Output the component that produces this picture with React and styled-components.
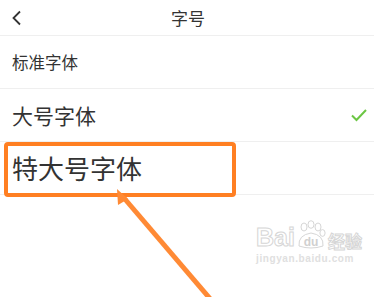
import React from "react";
import styled, { createGlobalStyle } from "styled-components";

const GlobalStyle = createGlobalStyle`
  html, body { margin: 0; padding: 0; background: #fff; }
  body { font-family: "Noto Sans CJK SC", "Noto Sans", sans-serif; }
`;

const Screen = styled.div`
  position: relative;
  width: 374px;
  height: 297px;
  overflow: hidden;
  background: #fff;
  color: #333;
`;

const Header = styled.div`
  display: grid;
  grid-template-columns: 60px 1fr 60px;
  align-items: center;
  height: 35px;
  border-bottom: 1px solid #efefef;
`;

const Back = styled.div`
  display: flex;
  align-items: center;
  padding-left: 11px;
  height: 100%;
`;

const Title = styled.div`
  text-align: center;
  font-size: 17px;
  line-height: 1;
  color: #333;
  padding-left: 2px;
`;

const Row = styled.div`
  display: flex;
  align-items: center;
  justify-content: space-between;
  height: 52px;
  padding: 0 6px 0 12px;
  border-bottom: 1px solid #efefef;
`;

const Label = styled.span`
  font-size: ${(p) => p.$size}px;
  line-height: 1;
  color: #333;
  white-space: nowrap;
`;

const Highlight = styled.div`
  position: absolute;
  left: 4px;
  top: 142px;
  width: 224px;
  height: 47px;
  border: 4px solid #ff7f22;
  border-radius: 4px;
`;

const Arrow = styled.svg`
  position: absolute;
  left: 0;
  top: 0;
`;

const Watermark = styled.div`
  position: absolute;
  left: 256px;
  top: 220px;
  display: flex;
  flex-direction: column;
  align-items: flex-start;
  font-family: "Liberation Sans", Arial, sans-serif;
`;

const Brand = styled.div`
  display: flex;
  align-items: flex-end;
  gap: 1px;
  height: 30px;
`;

const BrandText = styled.span`
  font-size: 25px;
  font-weight: bold;
  line-height: 1;
  color: #fff;
  -webkit-text-stroke: 1px #d6d6d6;
`;

const BrandCn = styled.span`
  font-family: "Noto Sans CJK SC", sans-serif;
  font-size: 17px;
  font-weight: bold;
  line-height: 1;
  color: #fff;
  -webkit-text-stroke: 1px #d6d6d6;
  margin-left: 1px;
  margin-bottom: 1px;
`;

const Site = styled.span`
  font-size: 10px;
  font-weight: bold;
  color: #e0e0e0;
  margin-top: 3px;
  letter-spacing: 0.6px;
`;

function Chevron() {
  return (
    <svg width="12" height="16" viewBox="0 0 12 16">
      <path d="M9 1.5 L2.5 8 L9 14.5" fill="none" stroke="#333" strokeWidth="1.8" />
    </svg>
  );
}

function Check() {
  return (
    <svg width="18" height="14" viewBox="0 0 18 14">
      <path d="M2 7.5 L6.5 12 L16 2" fill="none" stroke="#6cc644" strokeWidth="2" />
    </svg>
  );
}

function Paw() {
  return (
    <svg width="30" height="30" viewBox="0 0 30 30">
      <g fill="#fff" stroke="#d6d6d6" strokeWidth="1">
        <ellipse cx="8" cy="7" rx="3" ry="4" />
        <ellipse cx="15" cy="4.5" rx="3" ry="3.8" />
        <ellipse cx="22" cy="7" rx="3" ry="4" />
        <ellipse cx="26.5" cy="13" rx="2.6" ry="3.4" />
        <path d="M3 26 Q2 15 15 13 Q28 15 27 26 Q15 30 3 26 Z" />
      </g>
      <text x="15" y="26" textAnchor="middle" fontSize="12" fontWeight="bold" fill="#d0d0d0" fontFamily="Liberation Sans, sans-serif">du</text>
    </svg>
  );
}

export default function App() {
  return (
    <>
      <GlobalStyle />
      <Screen>
        <Header>
          <Back><Chevron /></Back>
          <Title>字号</Title>
          <div />
        </Header>
        <Row><Label $size={16.5}>标准字体</Label></Row>
        <Row><Label $size={21}>大号字体</Label><Check /></Row>
        <Row><Label $size={26}>特大号字体</Label></Row>

        <Watermark>
          <Brand>
            <BrandText>Bai</BrandText>
            <Paw />
            <BrandCn>经验</BrandCn>
          </Brand>
          <Site>jingyan.baidu.com</Site>
        </Watermark>

        <Highlight />
        <Arrow width="374" height="297" viewBox="0 0 374 297">
          <line x1="218" y1="308" x2="124" y2="198" stroke="#ff8a35" strokeWidth="5" />
          <polygon points="117,189 128,199 118,205" fill="#ff8a35" />
        </Arrow>
      </Screen>
    </>
  );
}
